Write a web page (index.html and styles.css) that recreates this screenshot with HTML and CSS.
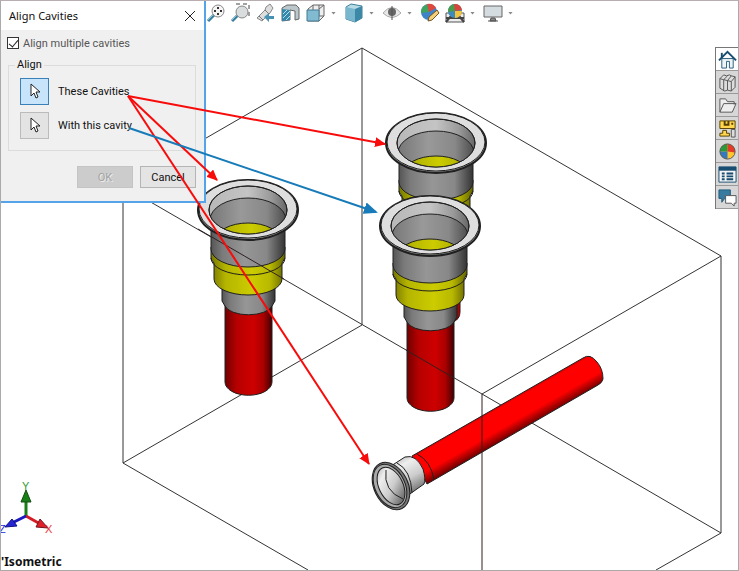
FILE: index.html
```html
<!DOCTYPE html>
<html lang="en">
<head>
<meta charset="utf-8">
<meta name="viewport" content="width=device-width, initial-scale=1">
<title>Align Cavities</title>
<link rel="stylesheet" href="styles.css">
</head>
<body>
<main class="workspace">
  <svg class="model" viewBox="0 0 739 571" preserveAspectRatio="xMinYMin slice" role="img" aria-label="Isometric view of a manifold with four cavities">
    <defs>
      <linearGradient id="steel"><stop offset="0" stop-color="#555"/><stop offset=".15" stop-color="#7a7a7a"/><stop offset=".45" stop-color="#969696"/><stop offset=".75" stop-color="#888"/><stop offset="1" stop-color="#343434"/></linearGradient>
      <linearGradient id="bore"><stop offset="0" stop-color="#777"/><stop offset=".4" stop-color="#999"/><stop offset=".75" stop-color="#888"/><stop offset="1" stop-color="#4c4c4c"/></linearGradient>
      <linearGradient id="bevel"><stop offset="0" stop-color="#b8b8b8"/><stop offset=".5" stop-color="#c4c4c4"/><stop offset=".8" stop-color="#999"/><stop offset="1" stop-color="#666"/></linearGradient>
      <linearGradient id="yellow"><stop offset="0" stop-color="#777700"/><stop offset=".2" stop-color="#b5b500"/><stop offset=".55" stop-color="#cccc00"/><stop offset=".8" stop-color="#b8b800"/><stop offset="1" stop-color="#626200"/></linearGradient>
      <linearGradient id="red"><stop offset="0" stop-color="#700000"/><stop offset=".25" stop-color="#b60000"/><stop offset=".6" stop-color="#ce0000"/><stop offset=".82" stop-color="#a90000"/><stop offset="1" stop-color="#420000"/></linearGradient>
      <linearGradient id="pipe" gradientUnits="userSpaceOnUse" x1="500" y1="404" x2="516" y2="432"><stop offset="0" stop-color="#c00000"/><stop offset=".12" stop-color="#f00"/><stop offset=".68" stop-color="#f00"/><stop offset="1" stop-color="#790000"/></linearGradient>
      <linearGradient id="collar" x1="0" y1="0" x2=".45" y2="1"><stop offset="0" stop-color="#aaa"/><stop offset=".3" stop-color="#eee"/><stop offset=".65" stop-color="#ccc"/><stop offset="1" stop-color="#777"/></linearGradient>
      <clipPath id="mouth"><ellipse cy="1" rx="39" ry="24"/></clipPath>
      <g id="cavity-head" class="ink">
        <path class="yellow" d="M-37 38V50L-34 54V70A34 16 0 0 0 34 70V54L37 49V38Z"/>
        <path d="M-37 49A37 17 0 0 0 37 49" fill="none"/>
        <path class="steel" d="M-37 14V40A37 18 0 0 0 37 40V14Z"/>
        <ellipse class="rim" cy="1" rx="50" ry="30" fill="#999"/>
        <ellipse rx="49" ry="29" fill="#dedede"/>
        <ellipse cy="1" rx="39" ry="24" fill="url(#bevel)"/>
        <g clip-path="url(#mouth)">
          <ellipse cy="11" rx="38" ry="22" fill="url(#bore)"/>
          <ellipse class="yellow" cy="31" rx="32" ry="17"/>
        </g>
        <ellipse cy="1" rx="39" ry="24" fill="none"/>
      </g>
      <g id="cavity">
        <g class="ink">
          <path d="M-23 95V173A23 13 0 0 0 24 173V95Z" fill="url(#red)"/>
          <path class="steel" d="M-26 74V92L-23 97A24 11 0 0 0 24 97L27 92V74Z"/>
        </g>
        <use href="#cavity-head"/>
      </g>
      <marker id="red-head" markerWidth="11" markerHeight="10" refX="10" refY="5" orient="auto" markerUnits="userSpaceOnUse"><path d="M0 0 11 5 0 10Z" fill="#f80b0b"/></marker>
      <marker id="blue-head" markerWidth="14" markerHeight="12" refX="12" refY="6" orient="auto" markerUnits="userSpaceOnUse"><path d="M0 0 14 6 0 12Z" fill="#167bb8"/></marker>
    </defs>
    <g class="edges">
      <path d="M362 48 123 186 123 463 308 570M362 48 721 256V533L656 570M362 48V325L123 463M482 394 721 533M123 186 482 394 721 256"/>
    </g>
    <use href="#cavity-head" x="436" y="142"/>
    <path class="ink" d="M452 300V322Q460 320 460 312V300Z" fill="#b00000"/>
    <use href="#cavity" x="430" y="225"/>
    <use href="#cavity" x="248" y="209"/>
    <g class="ink">
      <path d="M412 456 583 358Q590 353 597 362Q603 369 603 379Q602 383 598 385L427 484Z" fill="url(#pipe)"/>
      <path d="M417 454Q431 461 434 480" fill="none"/>
      <path d="M391 466 405 457Q416 454 423 469Q426 479 424 484L407 496Z" fill="url(#collar)"/>
      <path d="M397 463Q411 470 412 493" fill="none"/>
      <ellipse cx="391" cy="486" rx="17" ry="25" transform="rotate(-26 391 486)" fill="#777"/>
      <ellipse cx="390" cy="486" rx="15" ry="23" transform="rotate(-26 390 486)" fill="#aaa"/>
      <ellipse cx="391" cy="486" rx="12" ry="20" transform="rotate(-26 391 486)" fill="url(#collar)"/>
      <path d="M386 470Q383 491 403 499" fill="none"/>
    </g>
    <path class="edges overlay" d="M198 229 284 279M406 350 454 378M482 394V570"/>
    <g class="triad">
      <path d="M26 516V493" stroke="#168016" stroke-width="3"/><path d="M21 502 26 490 31 502Z" fill="#168016" stroke="#164c16"/>
      <path d="M26 516 42 525" stroke="#d51c24" stroke-width="3"/><path d="M40 519 48 528 36 527Z" fill="#df202a" stroke="#71151b"/>
      <path d="M26 516 10 524" stroke="#1919bd" stroke-width="3"/><path d="M12 519 5 527 17 526Z" fill="#2525d5" stroke="#111182"/>
      <text x="22" y="490" fill="#349c34">Y</text><text x="45" y="533" fill="#ef343b">X</text><text x="-1" y="533" fill="#2525df">Z</text>
    </g>
  </svg>

  <section class="dialog" aria-labelledby="dialog-title">
    <header class="titlebar">
      <h1 id="dialog-title">Align Cavities</h1>
      <button class="close" type="button" aria-label="Close"><svg width="12" height="12" viewBox="0 0 12 12"><path d="m1 1 10 10M11 1 1 11"/></svg></button>
    </header>
    <form class="form">
      <label class="multiple"><input type="checkbox" checked><span>Align multiple cavities</span></label>
      <fieldset>
        <legend>Align</legend>
        <div class="pick"><button id="these" class="picker active" type="button" aria-label="Select these cavities"><svg width="12" height="17" viewBox="0 0 12 17"><path d="M2 1V13L5 10 7 15 9 14 7 9H11Z"/></svg></button><label for="these">These Cavities</label></div>
        <div class="pick"><button id="with" class="picker" type="button" aria-label="Select reference cavity"><svg width="12" height="17" viewBox="0 0 12 17"><path d="M2 1V13L5 10 7 15 9 14 7 9H11Z"/></svg></button><label for="with">With this cavity</label></div>
      </fieldset>
      <div class="actions"><button type="button" disabled>OK</button><button type="button">Cancel</button></div>
    </form>
  </section>

  <nav class="view-tools" aria-label="View tools">
    <button type="button" aria-label="Zoom to fit"><svg width="20" height="20" viewBox="0 0 20 20"><path d="m2 18 6-6" stroke="#397d9f" stroke-width="3"/><path d="m2 17 6-6" stroke="#8bc3db"/><circle cx="12" cy="8" r="6" fill="#f5f5f5" stroke="#888"/><path d="M12 4v2M12 10v2M8 8h2M14 8h2" stroke="#333" stroke-width="2"/></svg></button>
    <button type="button" aria-label="Zoom to area"><svg width="20" height="20" viewBox="0 0 20 20"><path d="M5 1h13v13" stroke="#444" stroke-dasharray="4 3"/><path d="m1 18 6-6" stroke="#397d9f" stroke-width="3"/><path d="m1 17 6-6" stroke="#8bc3db"/><circle cx="11" cy="9" r="6" fill="#d9dddd" stroke="#888"/></svg></button>
    <button type="button" aria-label="Previous view"><svg width="20" height="20" viewBox="0 0 20 20"><path d="m1 15 8-8 1-3 4-3 3 4-3 5-8 8Z" fill="#ddd" stroke="#888"/><path d="m9 7 4 4M3 13l4 4" stroke="#777"/><path d="m8 14 5-4v3h5v3h-5v3Z" fill="#4792b4"/></svg></button>
    <button type="button" aria-label="Section view"><svg width="20" height="20" viewBox="0 0 20 20"><path d="m1 5 5-3h9l3 3v11l-4 1V8L9 7v10l-8 1Z" fill="#bbc7ca" stroke="#666"/><path d="m1 6 8 1v10l-8 1Z" fill="#3787aa"/><path d="m2 11 4-4M2 15l7-7M5 17l4-4" stroke="#b5e1f0"/></svg></button>
    <button type="button" aria-label="View orientation"><svg width="20" height="20" viewBox="0 0 20 20"><path d="m2 6 5-4h11v11l-5 5H2Z" fill="#eee" stroke="#666"/><path d="M7 2v11l-5 5M7 13h11M13 6l5-4M13 2v11" stroke="#666"/><path d="M1 7h12v11H1Z" fill="#80bbd1" stroke="#447b92"/></svg></button><i></i>
    <button type="button" aria-label="Display style"><svg width="20" height="20" viewBox="0 0 20 20"><path d="m2 4 5-3 11 2v12l-7 4-9-3Z" fill="#b7dce6" stroke="#3f7f99"/><path d="m2 4 9 2v13l-9-3Z" fill="#79b7cf"/><path d="m11 6 7-3v12l-7 4Z" fill="#3c88a7"/></svg></button><i></i>
    <button type="button" aria-label="Hide or show items"><svg width="20" height="20" viewBox="0 0 20 20"><path d="M1 10q9-11 18 0-9 9-18 0Z" fill="#e8e8e8" stroke="#aaa"/><circle cx="10" cy="9" r="4" fill="#666"/><path d="M10 3v14" stroke="#555"/></svg></button><i></i>
    <button type="button" aria-label="Edit appearance"><svg width="20" height="20" viewBox="0 0 20 20"><circle cx="9" cy="9" r="8" fill="#3f84c8"/><path d="M9 9V1a8 8 0 0 0-8 9Z" fill="#40a35e"/><path d="M9 9 7 1a8 8 0 0 1 9 4Z" fill="#df483e"/><path d="m8 18 1-4 8-7 2 3-7 7Z" fill="#f4d178" stroke="#755420"/></svg></button>
    <button type="button" aria-label="Apply scene"><svg width="20" height="20" viewBox="0 0 20 20"><path d="M1 10h18v9H1Z" fill="#eee" stroke="#555"/><path d="m1 19 5-6M19 19l-5-6M1 15h18" stroke="#444" stroke-width="2"/><circle cx="10" cy="8" r="7" fill="#3e8cbd"/><path d="M10 8V1a7 7 0 0 0-7 8Z" fill="#4a9b4c"/><path d="M10 8 9 1a7 7 0 0 1 8 6Z" fill="#d6443c"/><path d="M10 8h7a7 7 0 0 1-7 7Z" fill="#f4c53c"/></svg></button><i></i>
    <button type="button" aria-label="View settings"><svg width="20" height="20" viewBox="0 0 20 20"><path d="M1 3h18v11H1Z" fill="#d4dce0" stroke="#666"/><path d="M8 15h4l1 3H7ZM5 18h10" fill="#888" stroke="#555"/></svg></button><i></i>
  </nav>

  <nav class="side-tools" aria-label="Task pane">
    <button type="button" aria-label="Resources"><svg width="19" height="19" viewBox="0 0 20 20"><path d="M4 9h12v10h-4v-7H9v7H4Z" fill="#eef5f8" stroke="#285c79"/><path d="m1 11 9-9 9 9" stroke="#174d70" stroke-width="2"/><path d="M4 3v5" stroke="#174d70" stroke-width="2"/></svg></button>
    <button type="button" aria-label="Design library"><svg width="19" height="19" viewBox="0 0 20 20"><path d="m2 6 4-4 3 1 3-1 2 1 4 1v11l-4 4-4-1-3 1-5-3Z" fill="#ddd" stroke="#555"/><path d="m2 6 4 1v12M6 7l4-4M10 8v10M6 7l4 1 4-5M10 8l4 1v10M14 9l4-5" stroke="#555"/></svg></button>
    <button type="button" aria-label="File explorer"><svg width="19" height="19" viewBox="0 0 20 20"><path d="M2 17V3h6l2 3h7v3M2 17 6 8h13l-4 9Z" fill="#eee" stroke="#555"/></svg></button>
    <button type="button" aria-label="View palette"><svg width="19" height="19" viewBox="0 0 20 20"><path d="M2 2h16v8H2Z" fill="#ffd64e" stroke="#534000"/><path d="M7 2v4h4V2M14 5h2" stroke="#534000" stroke-width="2"/><path d="M2 18v-3h3v-3h4v3h3v3Z" fill="#ffd64e" stroke="#534000"/><path d="M14 11h4v8h-4Z" fill="#ddd" stroke="#555"/></svg></button>
    <button type="button" aria-label="Appearances"><svg width="19" height="19" viewBox="0 0 20 20"><circle cx="10" cy="10" r="8" fill="#ffc52f"/><path d="M10 10V2a8 8 0 0 0-8 8Z" fill="#269b3b"/><path d="M10 10H2a8 8 0 0 0 8 8Z" fill="#3478bd"/><path d="M10 10V2a8 8 0 0 1 8 9Z" fill="#e33b27"/><circle cx="10" cy="10" r="8" stroke="#555"/></svg></button>
    <button type="button" aria-label="Custom properties"><svg width="19" height="19" viewBox="0 0 20 20"><path d="M1 2h18v16H1Z" fill="#f5f5f5" stroke="#174d70"/><path d="M1 4h18" stroke="#174d70" stroke-width="4"/><path d="M4 9h3M4 12h3M4 15h3M9 9h7M9 12h7M9 15h7" stroke="#174d70" stroke-width="2"/></svg></button>
    <button type="button" aria-label="Forum"><svg width="19" height="19" viewBox="0 0 20 20"><path d="M1 2h12v9H7l-3 4v-4H1Z" fill="#397ba0" stroke="#205c7c"/><path d="M8 8h11v8h-2v3l-3-3H8Z" fill="#fff" stroke="#555"/></svg></button>
  </nav>

  <svg class="callouts" viewBox="0 0 739 571" preserveAspectRatio="xMinYMin slice" aria-hidden="true">
    <g stroke="#f80b0b"><path d="M128 96 385 144" marker-end="url(#red-head)"/><path d="M128 96 217 180" marker-end="url(#red-head)"/><path d="M128 96 369 464" marker-end="url(#red-head)"/></g>
    <path d="M129 128 376 212" stroke="#167bb8" marker-end="url(#blue-head)"/>
  </svg>
  <output class="view-name">'Isometric</output>
</main>
</body>
</html>
```
FILE: styles.css
```css
* { box-sizing: border-box; }
body { margin: 0; font-family: Roboto, "Liberation Sans", sans-serif; font-size: 11px; color: #111; }
button { padding: 0; font: inherit; color: inherit; }
button svg { display: block; fill: none; }
.workspace { position: relative; min-height: 100vh; overflow: hidden; border: 1px solid #aaa; border-top-color: #b8aeb0; background: #fff; display: grid; grid-template-columns: 205px 1fr 23px; align-items: start; }
.model, .callouts { position: absolute; inset: -1px; width: 100vw; height: 100vh; pointer-events: none; }
.callouts { z-index: 4; fill: none; stroke-width: 2; }
.ink { stroke: #202020; stroke-width: 1; }
.rim { stroke-width: 2; }
.edges { stroke: #333; stroke-width: 1; fill: none; }
.overlay { stroke: #302020; }
.steel { fill: url(#steel); }
.yellow { fill: url(#yellow); }
.triad { fill: none; font-family: "Liberation Sans", sans-serif; font-size: 11px; }
.dialog { position: relative; z-index: 2; grid-column: 1; border: solid #55a3e8; border-width: 0 2px 2px 0; background: #f0f0f0; }
.titlebar { display: flex; align-items: center; justify-content: space-between; height: 29px; padding: 0 7px 0 8px; background: #fff; }
.titlebar h1 { margin: 0; font-family: "Noto Sans", sans-serif; font-size: 11px; font-weight: 400; }
.close { display: grid; place-items: center; width: 14px; height: 20px; border: 0; background: none; }
.close svg { stroke: #222; }
.form { display: flex; flex-direction: column; padding: 6px 8px 13px 6px; }
.multiple { display: flex; align-items: center; gap: 4px; height: 14px; color: #555; }
.multiple input { position: relative; flex: none; appearance: none; width: 12px; height: 12px; margin: 0; border: 1px solid #333; background: #fff; }
.multiple input:checked::after { content: ""; position: absolute; left: 3px; top: 0; width: 4px; height: 8px; border: solid #222; border-width: 0 1px 1px 0; transform: rotate(40deg); }
fieldset { display: flex; flex-direction: column; gap: 7px; min-width: 0; margin: 7px 0 15px 1px; padding: 5px 11px 11px; border: 1px solid #dcdcdc; }
legend { margin-left: -5px; padding: 0 2px; line-height: 16px; }
.pick { display: flex; align-items: center; gap: 9px; }
.picker { display: grid; place-items: center; width: 29px; height: 27px; border: 1px solid #bbb; background: #e3e3e3; }
.picker.active { border-color: #397fb8; background: #c8e4fa; }
.picker svg { fill: #fff; stroke: #222; }
.actions { display: flex; justify-content: flex-end; gap: 7px; }
.actions button { width: 56px; height: 22px; border: 1px solid #b5b5b5; background: #e4e4e4; }
.actions button:disabled { border-color: #c4c4c4; background: #ccc; color: #a3a3a3; text-shadow: 1px 1px #eee; }
.view-tools { position: relative; z-index: 1; grid-column: 2; display: flex; align-items: center; gap: 5px; padding: 2px 0; }
.view-tools button, .side-tools button { display: grid; place-items: center; flex: none; border: 0; background: none; }
.view-tools button { width: 20px; height: 20px; }
.view-tools i { width: 5px; height: 3px; margin-right: 3px; background: #888; clip-path: polygon(0 0, 100% 0, 50% 100%); }
.side-tools { position: relative; z-index: 1; grid-column: 3; margin-top: 46px; border: solid #777; border-width: 1px 0 0 1px; }
.side-tools button { width: 22px; height: 23px; border-bottom: 1px solid #999; background: #d7d7d7; }
.side-tools button:first-child { background: #fff; }
.view-name { position: absolute; left: 0; bottom: 0; font-family: "Noto Sans", sans-serif; font-size: 12px; font-weight: 700; line-height: 16px; }
```
